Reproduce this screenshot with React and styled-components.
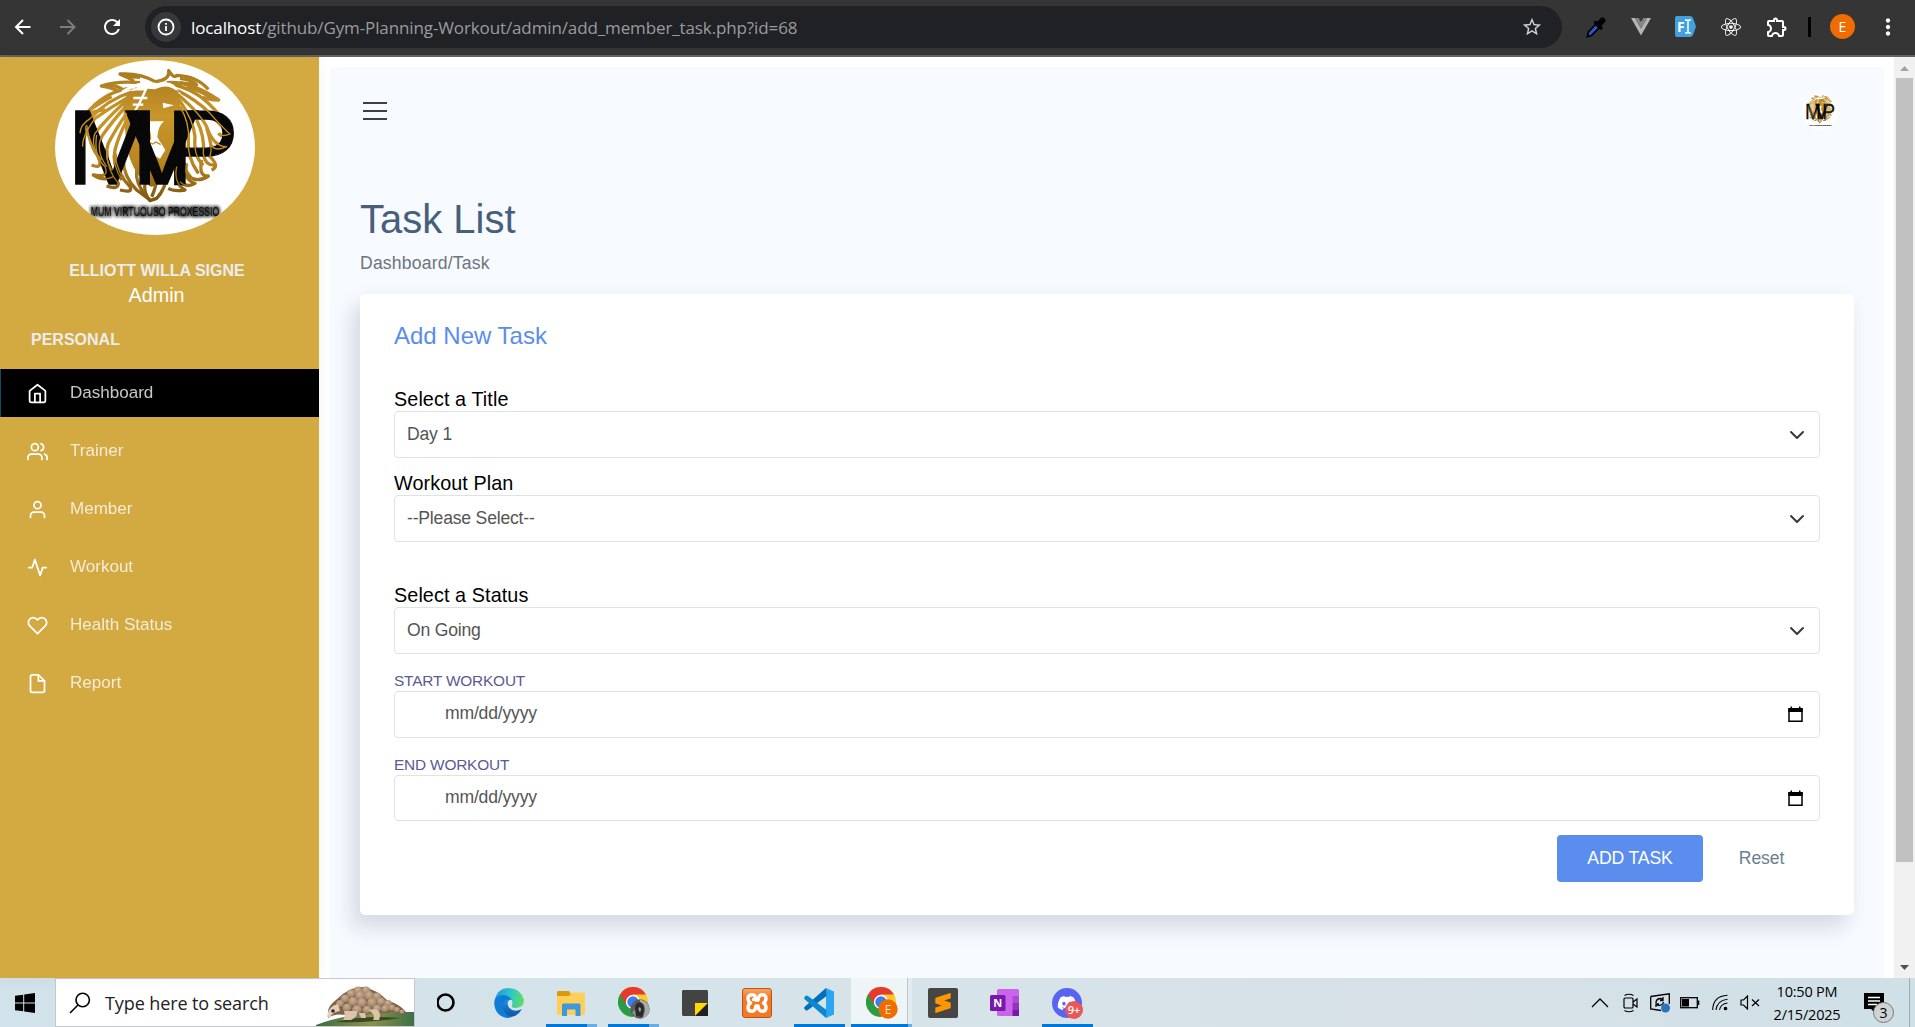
import React from "react";
import styled, { createGlobalStyle } from "styled-components";
import { FiHome, FiUsers, FiUser, FiActivity, FiHeart, FiFile } from "react-icons/fi";
import { MdOutlineExtension, MdStarBorder, MdRefresh, MdMoreVert } from "react-icons/md";
import { FaDiscord, FaReact } from "react-icons/fa";
import { SiSublimetext } from "react-icons/si";

const GlobalStyle = createGlobalStyle`
  * { box-sizing: border-box; }
  html, body { margin: 0; padding: 0; overflow: hidden; }
  body { font-family: "Liberation Sans", Arial, sans-serif; background: #fff; }
  svg { display: block; flex: none; }
`;

const UI_FONT = `"Open Sans", "Noto Sans", sans-serif`;

const Screen = styled.div`
  width: 1915px;
  height: 1027px;
  display: flex;
  flex-direction: column;
  overflow: hidden;
`;

/* ---------- browser bar ---------- */

const BrowserBar = styled.header`
  height: 57px;
  flex: none;
  display: flex;
  align-items: center;
  padding: 0 0 2px 10px;
  background: #353535;
  border-bottom: 2px solid #626262;
  color: #fff;
`;

const NavIcons = styled.div`
  display: flex;
  flex: none;
  gap: 21px;
  width: 135px;
  align-items: center;
`;

const AddressBar = styled.div`
  display: flex;
  flex: none;
  align-items: center;
  width: 1417px;
  height: 42px;
  border-radius: 21px;
  background: #202124;
  padding: 0 19px 0 6px;
`;

const InfoBadge = styled.div`
  width: 30px;
  height: 30px;
  border-radius: 50%;
  background: #37383a;
  display: flex;
  align-items: center;
  justify-content: center;
`;

const Url = styled.div`
  flex: 1;
  margin-left: 10px;
  padding-top: 2px;
  font: 17px/24px ${UI_FONT};
  letter-spacing: -0.12px;
  color: #9a9b9e;
  white-space: nowrap;
  b { font-weight: 400; color: #fff; }
`;

const Extensions = styled.div`
  display: flex;
  align-items: center;
  flex: 1;
  padding-left: 24px;
  gap: 24.5px;
`;

const VDivider = styled.span`
  width: 3px;
  flex: none;
  height: 20px;
  background: #000;
  margin: 0 -5px 0 -6px;
`;

const Profile = styled.span`
  width: 25px;
  flex: none;
  height: 25px;
  border-radius: 50%;
  background: #ef6c00;
  font: 14px/25px ${UI_FONT};
  text-align: center;
  margin-right: -5px;
`;

/* ---------- page ---------- */

const Page = styled.div`
  height: 921px;
  flex: none;
  display: flex;
`;

const Sidebar = styled.aside`
  width: 319px;
  flex: none;
  background: #d3a942;
  box-shadow: 0 0 14px rgba(0, 0, 0, 0.05);
  display: flex;
  flex-direction: column;
  padding-top: 3px;
  z-index: 1;
`;

const LogoWrap = styled.div`
  padding-left: 55px;
`;

const UserName = styled.div`
  margin-top: 24px;
  padding-right: 5px;
  text-align: center;
  font-size: 16px;
  line-height: 24px;
  font-weight: 700;
  color: #ededed;
`;

const Role = styled.div`
  margin-top: -1px;
  padding-right: 6px;
  text-align: center;
  font-size: 19.8px;
  line-height: 26px;
  color: #fff;
`;

const SectionTitle = styled.div`
  margin: 20px 0 17px 31px;
  font-size: 16px;
  line-height: 24px;
  font-weight: 700;
  color: #ededed;
`;

const Menu = styled.nav`
  display: flex;
  flex-direction: column;
  gap: 10px;
`;

const MenuItem = styled.div`
  height: 48px;
  display: flex;
  align-items: center;
  padding-left: 26px;
  border-left: 1px solid ${(p) => (p.$active ? "#0d4a70" : "transparent")};
  background: ${(p) => (p.$active ? "#000" : "transparent")};
  background-clip: padding-box;
  color: #fff;
`;

const MenuText = styled.span`
  margin-left: 22px;
  font-size: 17.05px;
  line-height: 24px;
  opacity: 0.78;
`;

const Main = styled.main`
  flex: 1;
  padding: 10px 10px 0 11px;
  background: #fff;
`;

const Content = styled.div`
  height: 911px;
  padding: 0 30px;
  background: #f7faff;
  overflow: hidden;
`;

const TopNav = styled.div`
  height: 88px;
  display: flex;
  align-items: center;
  justify-content: space-between;
  padding: 0 16px 0 3px;
`;

const Burger = styled.div`
  width: 24px;
  height: 18px;
  display: flex;
  flex-direction: column;
  justify-content: space-between;
  span { height: 2px; background: #404040; }
`;

const PageTitle = styled.h3`
  margin: 40px 0 0;
  font-size: 40px;
  line-height: 48px;
  font-weight: 400;
  color: #475f7b;
`;

const Crumb = styled.p`
  margin: 7px 0 18px;
  font-size: 17.6px;
  line-height: 26px;
  letter-spacing: 0.18px;
  color: #6c757d;
`;

const Card = styled.section`
  height: 621px;
  padding: 27px 34px 33px;
  border-radius: 5px;
  background: #fff;
  box-shadow: -8.8px 13.2px 19.8px rgba(25, 42, 70, 0.13), 0 0 20px rgba(25, 42, 70, 0.03);
`;

const CardTitle = styled.h4`
  margin: 0 0 36px;
  font-size: 24px;
  line-height: 30px;
  font-weight: 400;
  color: #5a8dee;
`;

const Label = styled.label`
  display: block;
  margin-top: ${(p) => p.$gap || 0}px;
  font-size: ${(p) => (p.$small ? "15.4px" : "19.8px")};
  line-height: ${(p) => (p.$small ? "20px" : "24px")};
  letter-spacing: ${(p) => (p.$small ? "-0.18px" : "0.09px")};
  color: ${(p) => (p.$small ? "#5b5a94" : "#000")};
`;

const Control = styled.div`
  height: ${(p) => p.$height || 47}px;
  display: flex;
  align-items: center;
  justify-content: space-between;
  border: 1px solid #dfe3e7;
  border-radius: 4px;
  background: #fff;
  padding: ${(p) => (p.$date ? "0 16px 0 50px" : "0 14px 0 12px")};
  font-size: 17.6px;
  line-height: 24px;
  color: #555;
`;

const Value = styled.span`
  padding-bottom: ${(p) => p.$lift || 2}px;
  letter-spacing: -0.2px;
`;

const Actions = styled.div`
  display: flex;
  justify-content: flex-end;
  margin-top: 14px;
`;

const Button = styled.button`
  width: ${(p) => (p.$primary ? 146 : 117)}px;
  height: 47px;
  border: 0;
  border-radius: 4px;
  padding: 0 0 2px;
  font: 17.6px/24px "Liberation Sans", Arial, sans-serif;
  letter-spacing: -0.12px;
  background: ${(p) => (p.$primary ? "#5a8dee" : "transparent")};
  color: ${(p) => (p.$primary ? "#fff" : "#6b7f93")};
`;

const Scrollbar = styled.div`
  width: 21px;
  flex: none;
  display: flex;
  flex-direction: column;
  align-items: center;
  background: #f1f1f1;
  padding: 9px 0 8px;
`;

const Thumb = styled.div`
  width: 17px;
  height: 784px;
  margin: 7px 0 auto;
  background: #c1c1c1;
`;

/* ---------- taskbar ---------- */

const Taskbar = styled.footer`
  height: 49px;
  flex: none;
  display: flex;
  background: linear-gradient(90deg, #d2e2ea 0%, #d6e4ea 45%, #d7e1e7 75%, #cfe0e7 100%);
  color: #000;
  font-family: ${UI_FONT};
`;

const StartButton = styled.div`
  width: 55px;
  display: flex;
  align-items: center;
  padding-left: 15px;
`;

const SearchBox = styled.div`
  width: 360px;
  display: flex;
  align-items: center;
  background: #fff;
  border: 1px solid #c6c8ca;
  padding-left: 13px;
  overflow: hidden;
`;

const SearchText = styled.span`
  flex: 1;
  margin-left: 14px;
  font-size: 18px;
  line-height: 24px;
  letter-spacing: -0.1px;
  color: #222;
  white-space: nowrap;
`;

const Apps = styled.div`
  display: flex;
  flex: 1;
  padding-left: 1px;
`;

const AppSlot = styled.div`
  width: 62px;
  height: 49px;
  flex: none;
  display: flex;
  flex-direction: column;
  align-items: center;
  padding-top: 9px;
  background: ${(p) =>
    p.$active ? "linear-gradient(90deg, transparent 1px, #eff5f7 1px, #eff5f7 57px, #b9c6cc 57px, #b9c6cc 58px, #e3edf1 58px)" : "transparent"};
`;

const IconHolder = styled.div`
  height: 32px;
  display: flex;
  align-items: center;
  padding-left: ${(p) => p.$shift || 0}px;
`;

const Underline = styled.div`
  margin-top: 5px;
  height: 3px;
  width: ${(p) => (p.$wide ? 61 : 51)}px;
  margin-left: ${(p) => (p.$wide ? 1 : 0)}px;
  background: ${(p) =>
    p.$stack ? `linear-gradient(90deg, #0078d7 ${p.$wide ? 57 : 41}px, #66aee5 ${p.$wide ? 57 : 41}px)` : "#0078d7"};
`;

const Tray = styled.div`
  display: flex;
  width: 185px;
`;

const TraySlot = styled.div`
  width: 30px;
  display: flex;
  align-items: center;
  justify-content: center;
`;

const Clock = styled.div`
  width: 74px;
  display: flex;
  flex-direction: column;
  align-items: center;
  font-size: 14.5px;
  line-height: 23px;
  letter-spacing: -0.2px;
  white-space: nowrap;
  padding-top: 2px;
`;

const Notice = styled.div`
  width: 46px;
  margin: 0 5px 0 20px;
  padding-top: 15px;
  border-right: 1px solid #9db0b8;
  position: relative;
`;

const Count = styled.span`
  position: absolute;
  left: 9px;
  top: 24px;
  width: 21px;
  height: 21px;
  border-radius: 50%;
  border: 1px solid #777;
  background: #cfd3d6;
  font-size: 14px;
  line-height: 19px;
  text-align: center;
`;

/* ---------- drawings ---------- */

const outerMane = [
  "M345 95 Q300 68 240 72 Q268 84 282 94",
  "M300 98 Q230 92 184 108 Q214 112 232 122",
  "M290 112 Q190 120 134 198 Q168 180 196 180",
  "M345 95 Q390 90 386 62 Q402 88 410 76 Q470 78 505 118",
  "M380 98 Q450 92 536 150 Q505 150 488 142",
  "M400 104 Q470 120 520 175 Q548 200 552 240",
  "M300 82 Q250 80 240 72",
  "M420 85 Q460 90 470 105 Q440 100 420 98",
  "M190 108 Q220 100 250 120",
  "M215 140 Q170 165 150 180",
  "M440 110 Q500 130 520 150",
];

const innerMane = [
  "M275 126 Q200 150 150 206 Q120 225 120 250",
  "M268 140 Q215 170 165 205 Q125 260 128 290",
  "M410 120 Q470 150 510 190 Q545 230 570 252 Q545 262 535 250",
  "M415 135 Q480 190 500 230 Q520 290 560 290 Q530 305 515 288",
  "M262 150 Q200 205 165 250 Q150 290 185 330",
  "M262 165 Q215 215 185 260 Q165 300 200 350",
  "M260 190 Q225 240 205 280 Q190 320 215 360",
  "M258 215 Q235 260 225 300 Q215 340 245 390",
  "M140 225 Q150 290 175 320 Q190 360 155 345",
  "M170 255 Q160 320 195 350 Q210 385 160 375 Q190 395 220 380",
  "M200 300 Q200 360 235 400 Q235 420 200 408",
  "M225 310 Q230 370 270 410 Q280 430 240 420",
  "M418 150 Q460 210 465 260 Q460 320 490 345",
  "M420 170 Q450 220 445 270 Q440 320 475 370",
  "M470 210 Q495 260 490 310 Q495 350 530 345",
  "M500 235 Q520 290 510 320 Q540 350 515 360",
  "M485 330 Q475 380 505 378 Q480 395 455 385",
  "M440 340 Q430 390 465 400 Q440 415 420 395",
  "M410 350 Q400 400 435 420 Q400 425 385 415",
];

const beard = [
  "M250 330 Q250 380 290 420 Q310 435 330 450",
  "M420 195 Q435 240 425 290 Q415 340 455 385",
  "M385 365 Q375 420 350 445 L330 452 Q310 430 315 400",
  "M290 360 Q285 400 320 440",
  "M350 375 Q350 410 335 440",
];

const Logo = ({ width, height, id }) => (
  <svg width={width} height={height} viewBox="45 30 600 525" preserveAspectRatio="none">
    <defs>
      <clipPath id={`${id}-clip`}>
        <ellipse cx="345" cy="292.5" rx="300" ry="262.5" />
      </clipPath>
      <linearGradient id={`${id}-gold`} x1="0" y1="60" x2="0" y2="455" gradientUnits="userSpaceOnUse">
        <stop offset="0" stopColor="#a87a1d" />
        <stop offset="0.35" stopColor="#c9962b" />
        <stop offset="0.7" stopColor="#b98622" />
        <stop offset="1" stopColor="#7d5511" />
      </linearGradient>
      <filter id={`${id}-halo`} x="-10%" y="-40%" width="120%" height="180%">
        <feMorphology operator="dilate" radius="4" />
        <feGaussianBlur stdDeviation="4" result="halo" />
        <feMerge>
          <feMergeNode in="halo" />
          <feMergeNode in="SourceGraphic" />
        </feMerge>
      </filter>
    </defs>
    <g clipPath={`url(#${id}-clip)`}>
      <rect x="45" y="30" width="600" height="525" fill="#fff" />
      <path
        d="M262 128 Q300 112 345 118 Q390 100 410 115 Q425 145 420 190 L405 300 Q385 360 350 400 Q335 420 320 400 Q280 370 262 300 Q250 200 250 165Z"
        fill={`url(#${id}-gold)`}
      />
      <g fill="none" stroke={`url(#${id}-gold)`} strokeWidth="10" strokeLinejoin="round">
        {outerMane.map((d) => <path key={d} d={d} />)}
        {innerMane.map((d) => <path key={d} d={d} />)}
        {beard.map((d) => <path key={d} d={d} />)}
      </g>
      <path d="M245 122 Q300 85 345 104 Q400 80 425 135 Q385 95 345 116 Q300 96 245 132Z" fill="#fff" />
      <path d="M278 118 H318 Q300 160 280 192 M280 144 H322 M278 164 H310" fill="none" stroke="#fff" strokeWidth="7" />
      <path d="M368 158 L402 166 L370 175Z" fill="#fff" />
      <path d="M312 214 H372 Q354 228 352 262 L376 300 L360 326 L345 318 L328 328 L318 290 L334 266 Q332 228 312 222Z" fill="#fff" />
      <g fill="none" stroke={`url(#${id}-gold)`} strokeWidth="4">
        <path d="M326 276 L338 282 L348 276 L362 284" />
      </g>
      <text
        transform="translate(80 403) scale(3.3 3.17)"
        fill="#080808"
        stroke="#080808"
        strokeWidth="1.2"
        fontFamily="Liberation Sans, Arial, sans-serif"
        fontSize="100"
        letterSpacing="-30"
      >
        MVP
      </text>
      <g fill="none" stroke={`url(#${id}-gold)`} strokeWidth="4" strokeLinejoin="round">
        {innerMane.map((d) => <path key={d} d={d} />)}
      </g>
      <text
        x="345"
        y="499"
        textAnchor="middle"
        textLength="385"
        lengthAdjust="spacingAndGlyphs"
        fontFamily="Liberation Sans, Arial, sans-serif"
        fontSize="36"
        fill="#111"
        filter={`url(#${id}-halo)`}
      >
        MUM VIRTUOUSO PROXESSIO
      </text>
    </g>
  </svg>
);

const Chevron = () => (
  <svg width="16" height="16" viewBox="0 0 16 16">
    <path d="M2 5 L8 11 L14 5" fill="none" stroke="#343a40" strokeWidth="2" strokeLinecap="round" strokeLinejoin="round" />
  </svg>
);

const CalendarIcon = () => (
  <svg width="15" height="17" viewBox="0 0 15 17">
    <path d="M1 3 H14 V15.2 H1Z" fill="none" stroke="#000" strokeWidth="1.5" />
    <rect x="0.3" y="2" width="14.4" height="4" fill="#000" />
    <rect x="2.5" y="0.5" width="1.5" height="2" fill="#000" />
    <rect x="11" y="0.5" width="1.5" height="2" fill="#000" />
  </svg>
);

const Arrow = ({ flip, color }) => (
  <svg width="24" height="24" viewBox="0 0 24 24" fill="none" stroke={color} strokeWidth="2">
    <path d={flip ? "M5 12 H19 M12.5 5 L19.5 12 L12.5 19" : "M20.5 12 H7 M13 5 L6 12 L13 19"} />
  </svg>
);

const InfoIcon = () => (
  <svg width="18" height="18" viewBox="0 0 18 18">
    <circle cx="9" cy="9" r="7.5" fill="none" stroke="#fff" strokeWidth="1.8" />
    <path d="M9 8 V13 M9 5 V6.8" stroke="#fff" strokeWidth="1.8" />
  </svg>
);

const PickerIcon = () => (
  <svg width="20" height="22" viewBox="0 0 20 22">
    <path d="M10.5 7.5 L2.5 16 L1.5 20.5 L5.5 19.5 L14 11Z" fill="#3355d8" stroke="#000" strokeWidth="1.8" />
    <path d="M9.5 6.5 L15 12" stroke="#000" strokeWidth="3.4" strokeLinecap="round" />
    <path d="M12.5 8.5 L16.5 4.5" stroke="#000" strokeWidth="6" strokeLinecap="round" />
  </svg>
);

const VueIcon = () => (
  <svg width="20" height="18" viewBox="0 0 20 18">
    <path d="M0 0 H4 L10 10.5 L16 0 H20 L10 17.5Z" fill="#b5b5b5" />
    <path d="M4 0 H7.7 L10 4 L12.3 0 H16 L10 10.5Z" fill="#858585" />
  </svg>
);

const FontIcon = () => (
  <svg width="21" height="21" viewBox="0 0 21 21">
    <path d="M2 0 H15 Q17 0 18 2 L21 10.5 L18 19 Q17 21 15 21 H2 Q0 21 0 19 V2 Q0 0 2 0Z" fill="#41a0e0" />
    <text x="2" y="16" fontFamily="Open Sans, sans-serif" fontWeight="700" fontSize="14" fill="#fff">F</text>
    <path d="M10 4 H12 L13 5 L14 4 H16 M13 5 V16 M10 17 H12 L13 16 L14 17 H16" fill="none" stroke="#fff" strokeWidth="1.5" />
  </svg>
);

const WindowsIcon = () => (
  <svg width="20" height="20" viewBox="0 0 20 20">
    <path d="M0 2.8 L8.2 1.7 V9.5 H0Z M9.2 1.5 L20 0 V9.5 H9.2Z M0 10.5 H8.2 V18.3 L0 17.2Z M9.2 10.5 H20 V20 L9.2 18.5Z" />
  </svg>
);

const SearchIcon = () => (
  <svg width="22" height="22" viewBox="0 0 22 22" fill="none" stroke="#000" strokeWidth="1.6">
    <circle cx="13.7" cy="8" r="6.7" />
    <path d="M9 13 L1 21" />
  </svg>
);

const scaleRows = [
  [42, 7, 4.5], [50, 7, 4.5], [35, 10, 4.5], [44, 12, 5], [53, 12, 5], [61, 13, 4.5], [29, 15, 4.5], [37, 18, 5],
  [46, 19, 5], [56, 19, 5], [65, 18, 4.5], [72, 20, 4], [24, 20, 4], [31, 24, 4.5], [41, 26, 5], [51, 26, 4.5],
  [61, 25, 4.5], [69, 25, 4], [76, 24, 3.6], [81, 26, 3], [86, 28, 2.4],
];

const PangolinSvg = styled.svg`
  align-self: flex-end;
`;

const Pangolin = () => (
  <PangolinSvg width="98" height="42" viewBox="0 0 98 42">
    <defs>
      <linearGradient id="hill" x1="0" y1="0" x2="1" y2="0">
        <stop offset="0" stopColor="#3c6b45" />
        <stop offset="0.55" stopColor="#8b9449" />
        <stop offset="1" stopColor="#3d7046" />
      </linearGradient>
      <radialGradient id="scale" cx="0.45" cy="0.3" r="0.75">
        <stop offset="0" stopColor="#cdb195" />
        <stop offset="0.65" stopColor="#a5876b" />
        <stop offset="1" stopColor="#5e4939" />
      </radialGradient>
    </defs>
    <path d="M0 41 Q35 27 98 28 V42 H0Z" fill="url(#hill)" />
    <path d="M20 38 Q45 31 85 34 Q55 39 20 38Z" fill="#3b4726" />
    <path d="M12 28 Q12 22 20 16 Q32 3 47 3 Q60 5 72 17 Q84 20 90 28 L70 29 L30 31 Q18 29 12 34Z" fill="#7d624d" />
    {scaleRows.map(([x, y, r]) => (
      <circle key={`${x}-${y}`} cx={x} cy={y} r={r} fill="url(#scale)" />
    ))}
    <path d="M22 20 Q12 22 11 33 L14 33 Q17 28 24 27Z" fill="#e6cdb5" />
    <path d="M28 27 Q30 35 26 36 H35 Q42 33 41 27Z M52 26 Q60 30 57 36 H63 Q66 28 60 25Z M43 29 L45 34 H50 L49 29Z" fill="#dcc4ab" />
    <circle cx="17" cy="27" r="1.8" fill="#31243b" />
  </PangolinSvg>
);

const EdgeIcon = () => (
  <svg width="30" height="30" viewBox="0 0 30 30">
    <defs>
      <linearGradient id="edgeTop" x1="0" y1="0.3" x2="1" y2="0.4">
        <stop offset="0" stopColor="#2493dc" />
        <stop offset="0.5" stopColor="#2cc3d2" />
        <stop offset="1" stopColor="#62dc63" />
      </linearGradient>
      <linearGradient id="edgeLow" x1="0" y1="0" x2="0" y2="1">
        <stop offset="0" stopColor="#1e8fdf" />
        <stop offset="1" stopColor="#0c55a8" />
      </linearGradient>
    </defs>
    <path d="M0.5 13 Q3 0 15 0 Q27 0.5 30 12 Q30 20 21 20 Q17 20 18 17 Q20 11 13 9 Q5 8 0.5 13Z" fill="url(#edgeTop)" />
    <path d="M0.2 15 Q1 7 10 7 Q16 8 18 12 Q13 11 11.5 17 Q11 24 19 28.5 Q16 30 13 30 Q1 28 0.2 15Z" fill="#0f7cd6" />
    <path d="M12 12 Q6 16 10 23 Q14 30 21 28 Q26 25 28 21 Q20 25 15.5 20 Q12 16 15 12Z" fill="url(#edgeLow)" />
  </svg>
);

const FolderIcon = () => (
  <svg width="28" height="25" viewBox="0 0 28 25">
    <path d="M0 1.5 Q0 0 1.5 0 H12 L14 3 V6 H0Z" fill="#dc9a0a" />
    <path d="M0 5 H12 L15 1.5 H26 Q28 1.5 28 3.5 V21 Q28 24 26 24 H2 Q0 24 0 22Z" fill="#ffcf57" />
    <path d="M5 25 V14 Q5 12.5 6.5 12.5 H22 Q23.5 12.5 23.5 14 V25 H18.5 V18.5 H10 V25Z" fill="#3f97dc" />
  </svg>
);

const ChromeIcon = ({ letter }) => (
  <svg width="32" height="32" viewBox="0 0 32 32">
    <circle cx="15" cy="15" r="15" fill="#ffc928" />
    <path d="M15 15 L2 7.5 A15 15 0 0 0 15 30 L21.5 18.75Z" fill="#2a9c46" />
    <path d="M15 15 L2 7.5 A15 15 0 0 1 28 7.5 H15Z" fill="#e53b2e" />
    <path d="M2 7.5 L9 19 L15 8Z" fill="#e53b2e" />
    <circle cx="15" cy="15" r="7.2" fill="#fff" />
    <circle cx="15" cy="15" r="5.7" fill="#3a7ff0" />
    <circle cx="22" cy="22" r="9.7" fill={letter ? "#ef6c00" : "#5b5c5e"} />
    {letter ? (
      <text x="22" y="26.5" textAnchor="middle" fontFamily="Open Sans, sans-serif" fontSize="12" fill="#ffe1c4">E</text>
    ) : (
      <g>
        <path d="M22 12.5 Q31 14 31.5 22 Q31 30 24 31.5 L27 24 Q27 17 22 15Z" fill="#a9abad" />
        <path d="M18 29 Q15 18 20 15.5 Q26 15 26 21 L25 30Z" fill="#2b2b2c" />
        <path d="M20.5 21 Q22 19 23 22 L22.5 24.5 H21Z" fill="#a4a5a7" />
        <path d="M14 26 L17 22 L18 30Z" fill="#8d8f91" />
      </g>
    )}
  </svg>
);

const StickyIcon = () => (
  <svg width="26" height="26" viewBox="0 0 26 26">
    <path d="M1 0 H25 L26 1 V13 L13 26 H1 L0 25 V1Z" fill="#434343" />
    <path d="M13 13 H26 L13 26Z" fill="#ffd800" />
    <path d="M26 13 V26 H13Z" fill="#202020" />
  </svg>
);

const Tile = styled.div`
  width: 30px;
  height: 30px;
  display: flex;
  align-items: center;
  justify-content: center;
  border-radius: ${(p) => p.$radius}px;
  background: ${(p) => p.$bg};
  border: ${(p) => p.$edge || "0"};
`;

const XamppMark = () => (
  <svg width="24" height="22" viewBox="0 0 24 22">
    <path
      d="M8.5 7.5 H10.5 V5.5 Q10 2.7 7 2.7 Q3 2.7 3 6.5 Q3 9.5 5.5 11 Q3 12.5 3 15.5 Q3 19.3 7 19.3 Q10.5 19.3 10.8 14 H13.2 Q13.5 19.3 17 19.3 Q21 19.3 21 15.5 Q21 12.5 18.5 11 Q21 9.5 21 6.5 Q21 2.7 17 2.7 Q13.5 2.7 13.2 8 H10.8"
      fill="none"
      stroke="#fff"
      strokeWidth="3.4"
      strokeLinejoin="round"
      strokeLinecap="round"
    />
  </svg>
);

const VsCodeIcon = () => (
  <svg width="30" height="30" viewBox="0 0 30 30">
    <path d="M22 0 L30 3.5 V26.5 L22 30Z" fill="#2aa7f0" />
    <path d="M22 0 L22.5 8 L4 22 Q2.5 23 1.5 22 L0.5 21 Q-0.5 20 1 18.5Z" fill="#0070ba" />
    <path d="M22 30 L22.5 22 L4 8 Q2.5 7 1.5 8 L0.5 9 Q-0.5 10 1 11.5Z" fill="#0f86cf" />
  </svg>
);

const OneNoteIcon = () => (
  <svg width="30" height="28" viewBox="0 0 30 28">
    <rect x="7" y="0" width="22" height="27" rx="1.5" fill="#ca64ea" />
    <rect x="22.5" y="7" width="6.5" height="7" fill="#ae4bd5" />
    <rect x="22.5" y="14" width="6.5" height="7" fill="#9332bf" />
    <rect x="22.5" y="21" width="6.5" height="6" fill="#7719aa" />
    <rect x="0" y="6" width="15.5" height="16" rx="1.5" fill="#7719aa" />
    <text x="7.7" y="18" textAnchor="middle" fontFamily="Open Sans, sans-serif" fontWeight="700" fontSize="11" fill="#fff">N</text>
  </svg>
);

const DiscordHolder = styled.div`
  width: 30px;
  height: 30px;
  border-radius: 50%;
  background: #5865f2;
  display: flex;
  align-items: center;
  justify-content: center;
  position: relative;
`;

const DiscordBadge = styled.span`
  position: absolute;
  left: 13px;
  top: 13px;
  width: 18px;
  height: 18px;
  border-radius: 50%;
  background: #ee5557;
  color: #fff;
  font: 600 11px/18px ${UI_FONT};
  text-align: center;
`;

const trayIcons = [
  <svg width="18" height="10" viewBox="0 0 18 10">
    <path d="M1 9 L9 1 L17 9" fill="none" stroke="#000" strokeWidth="1.3" />
  </svg>,
  <svg width="16" height="20" viewBox="0 0 16 20" fill="none" stroke="#000" strokeWidth="1.2">
    <rect x="2" y="5" width="9" height="10" rx="1" />
    <path d="M11 9 L15 6 V14 L11 11 M2.5 2.5 Q7 0 11.5 2.5 M2.5 17.5 Q7 20 11.5 17.5" />
  </svg>,
  <svg width="20" height="20" viewBox="0 0 20 20" fill="none" stroke="#000" strokeWidth="1.3">
    <path d="M0.7 3.5 L19.3 0.8 V11 M0.7 3.5 V16 L11 17.5" />
    <path d="M6 10 Q6 6 10 5.5 Q12 5.5 13 7 M13 4 V7.5 H10 M13.5 9 Q13 12 9 12.5 Q7 12 6 11 M6 14 V10.8 H9" />
    <circle cx="15.5" cy="15" r="4.5" fill="#2b72bf" stroke="none" />
  </svg>,
  <svg width="20" height="12" viewBox="0 0 20 12">
    <rect x="0.7" y="0.7" width="16.6" height="10" fill="none" stroke="#000" strokeWidth="1.3" />
    <rect x="2" y="2" width="7" height="7.5" />
    <rect x="18" y="3.5" width="1.3" height="4.5" />
  </svg>,
  <svg width="16" height="17" viewBox="0 0 16 17" fill="none" stroke="#000" strokeWidth="1.1">
    <path d="M0.7 16 Q1 2 15.5 1.2 M4 16 Q5 6.5 15.5 5.2 M7.5 16 Q8.5 10 15.5 9" />
    <circle cx="13.5" cy="14.5" r="1.3" fill="#000" />
  </svg>,
  <svg width="20" height="15" viewBox="0 0 20 15" fill="none" stroke="#000" strokeWidth="1.2">
    <path d="M1 5 H3.5 L7.5 1 V14 L3.5 10 H1Z M12 4.5 L19 11 M19 4.5 L12 11" />
  </svg>,
];

const menu = [
  ["Dashboard", FiHome],
  ["Trainer", FiUsers],
  ["Member", FiUser],
  ["Workout", FiActivity],
  ["Health Status", FiHeart],
  ["Report", FiFile],
];

const apps = [
  { key: "cortana", icon: <svg width="20" height="20" viewBox="0 0 20 20"><circle cx="8.5" cy="9.5" r="8" fill="none" stroke="#000" strokeWidth="2.6" /></svg> },
  { key: "edge", icon: <EdgeIcon /> },
  { key: "files", icon: <FolderIcon />, line: true, stack: true },
  { key: "chrome", icon: <ChromeIcon />, line: true, stack: true, shift: 2 },
  { key: "notes", icon: <StickyIcon /> },
  { key: "xampp", icon: <Tile $radius={3} $bg="linear-gradient(#f9a566, #f47920 30%)" $edge="1px solid #b9551a"><XamppMark /></Tile> },
  { key: "code", icon: <VsCodeIcon />, line: true },
  { key: "chrome-e", icon: <ChromeIcon letter />, line: true, stack: true, active: true, shift: 2 },
  { key: "sublime", icon: <Tile $radius={2} $bg="#464646"><SiSublimetext size={20} color="#ff9800" /></Tile> },
  { key: "onenote", icon: <OneNoteIcon /> },
  { key: "discord", icon: <DiscordHolder><FaDiscord size={20} color="#fff" /><DiscordBadge>9+</DiscordBadge></DiscordHolder>, line: true },
];

export default function App() {
  return (
    <Screen>
      <GlobalStyle />
      <BrowserBar>
        <NavIcons>
          <Arrow color="#fff" />
          <Arrow flip color="#7d7d7d" />
          <MdRefresh size={24} />
        </NavIcons>
        <AddressBar>
          <InfoBadge><InfoIcon /></InfoBadge>
          <Url><b>localhost</b>/github/Gym-Planning-Workout/admin/add_member_task.php?id=68</Url>
          <MdStarBorder size={22} color="#d0d0d0" />
        </AddressBar>
        <Extensions>
          <PickerIcon />
          <VueIcon />
          <FontIcon />
          <FaReact size={20} />
          <MdOutlineExtension size={24} />
          <VDivider />
          <Profile>E</Profile>
          <MdMoreVert size={26} />
        </Extensions>
      </BrowserBar>

      <Page>
        <Sidebar>
          <LogoWrap><Logo width={200} height={175} id="logo" /></LogoWrap>
          <UserName>ELLIOTT WILLA SIGNE</UserName>
          <Role>Admin</Role>
          <SectionTitle>PERSONAL</SectionTitle>
          <Menu>
            {menu.map(([name, Icon], i) => (
              <MenuItem key={name} $active={i === 0}>
                <Icon size={21} />
                <MenuText>{name}</MenuText>
              </MenuItem>
            ))}
          </Menu>
        </Sidebar>

        <Main>
          <Content>
            <TopNav>
              <Burger><span /><span /><span /></Burger>
              <Logo width={35} height={37} id="avatar" />
            </TopNav>
            <PageTitle>Task List</PageTitle>
            <Crumb>Dashboard/Task</Crumb>
            <Card>
              <CardTitle>Add New Task</CardTitle>
              <Label>Select a Title</Label>
              <Control><Value>Day 1</Value><Chevron /></Control>
              <Label $gap={13}>Workout Plan</Label>
              <Control><Value>--Please Select--</Value><Chevron /></Control>
              <Label $gap={41}>Select a Status</Label>
              <Control><Value>On Going</Value><Chevron /></Control>
              <Label $small $gap={17}>START WORKOUT</Label>
              <Control $date><Value $lift={3}>mm/dd/yyyy</Value><CalendarIcon /></Control>
              <Label $small $gap={17}>END WORKOUT</Label>
              <Control $date $height={46}><Value $lift={2}>mm/dd/yyyy</Value><CalendarIcon /></Control>
              <Actions>
                <Button $primary>ADD TASK</Button>
                <Button>Reset</Button>
              </Actions>
            </Card>
          </Content>
        </Main>

        <Scrollbar>
          <svg width="9" height="5" viewBox="0 0 9 5"><path d="M0 5 L4.5 0 L9 5Z" fill="#a3a3a3" /></svg>
          <Thumb />
          <svg width="9" height="5" viewBox="0 0 9 5"><path d="M0 0 L4.5 5 L9 0Z" fill="#505050" /></svg>
        </Scrollbar>
      </Page>

      <Taskbar>
        <StartButton><WindowsIcon /></StartButton>
        <SearchBox>
          <SearchIcon />
          <SearchText>Type here to search</SearchText>
          <Pangolin />
        </SearchBox>
        <Apps>
          {apps.map((a) => (
            <AppSlot key={a.key} $active={a.active}>
              <IconHolder $shift={a.shift}>{a.icon}</IconHolder>
              {a.line && <Underline $stack={a.stack} $wide={a.active} />}
            </AppSlot>
          ))}
        </Apps>
        <Tray>
          {trayIcons.map((icon, i) => (
            <TraySlot key={i}>{icon}</TraySlot>
          ))}
        </Tray>
        <Clock><span>10:50 PM</span><span>2/15/2025</span></Clock>
        <Notice>
          <svg width="20" height="20" viewBox="0 0 20 20">
            <path d="M0 0 H20 V16 H11 V20 L7 16 H0Z" />
            <path d="M4 4.5 H16 M4 8 H16 M4 11.5 H13" stroke="#fff" strokeWidth="1.3" />
          </svg>
          <Count>3</Count>
        </Notice>
      </Taskbar>
    </Screen>
  );
}
